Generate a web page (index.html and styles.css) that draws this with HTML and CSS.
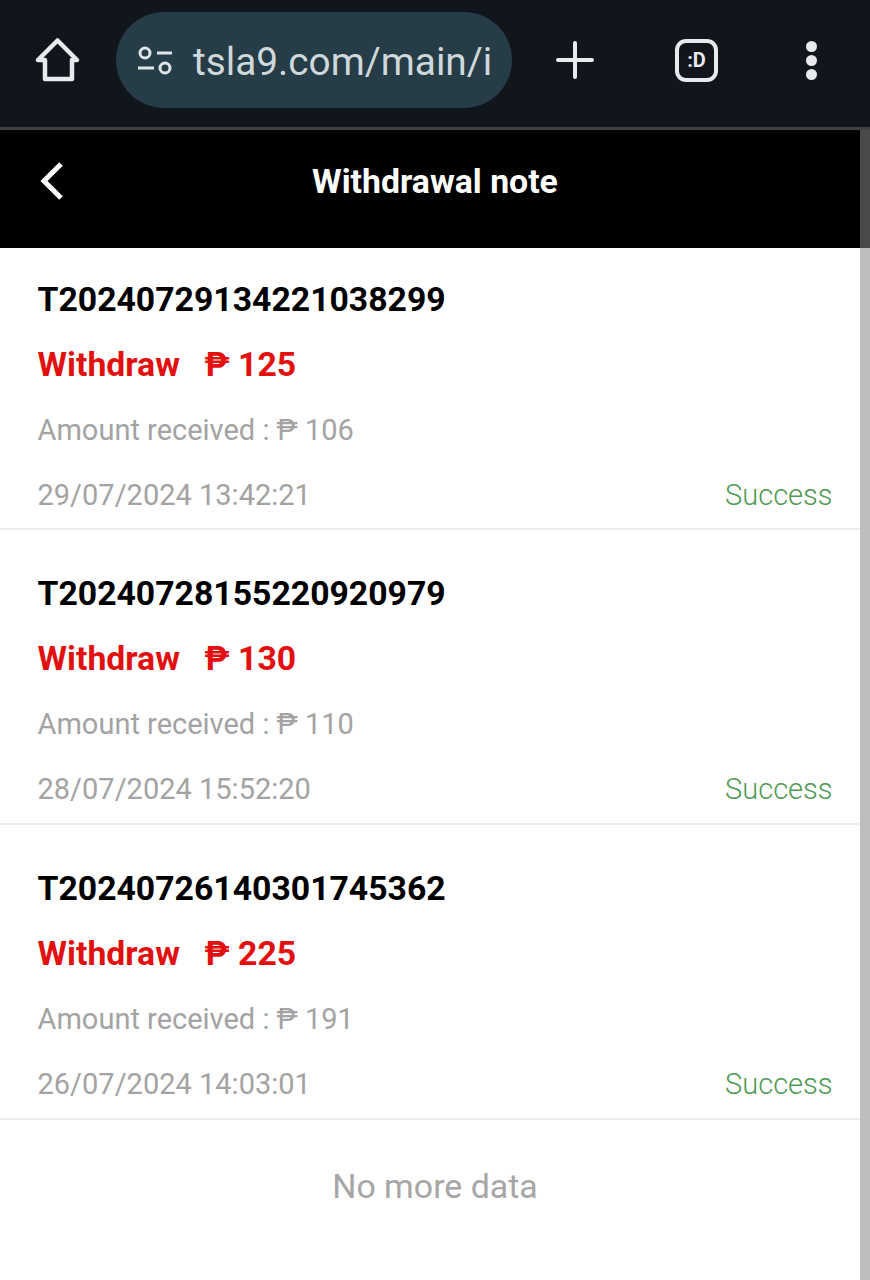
FILE: index.html
```html
<!DOCTYPE html>
<html lang="en">
<head>
  <meta charset="UTF-8" />
  <meta name="viewport" content="width=device-width, initial-scale=1.0" />
  <title>Withdrawal note</title>
  <link rel="stylesheet" href="styles.css">
</head>
<body>
  <div class="toolbar">
    <svg class="icon-home" width="46" height="46" viewBox="0 0 46 46" fill="none" stroke="#e8eaed" stroke-width="4.5" stroke-linejoin="round"><path d="M22.5 3.5 L42 23 H37 V42 H10 V23 H3 Z"/></svg>
    <div class="urlbar">
      <svg width="36" height="29" viewBox="0 0 36 29" fill="none" stroke="#dfe5e8" stroke-width="3"><circle cx="8" cy="7" r="5"/><path d="M20 7 H35"/><path d="M1 22 H17"/><circle cx="28" cy="22" r="5"/></svg>
      <span class="url">tsla9.com/main/i</span>
    </div>
    <svg class="icon-plus" width="38" height="38" viewBox="0 0 38 38" fill="none" stroke="#e8eaed" stroke-width="4" stroke-linecap="round"><path d="M19 2 V36 M2 19 H36"/></svg>
    <div class="tabs">:D</div>
    <div class="dots"><i></i><i></i><i></i></div>
  </div>

  <div class="page">
    <div class="content">
      <header>
        <svg class="back" width="26" height="38" viewBox="0 0 26 38" fill="none" stroke="#fff" stroke-width="5"><path d="M23 2 L6 19 L23 36"/></svg>
        <h1>Withdrawal note</h1>
      </header>

      <div class="list">
        <div class="row">
          <div class="order">T20240729134221038299</div>
          <div class="amount"><span>Withdraw</span><span>₱ 125</span></div>
          <div class="muted">Amount received : ₱ 106</div>
          <div class="foot"><span class="muted">29/07/2024 13:42:21</span><span class="status">Success</span></div>
        </div>
        <div class="row">
          <div class="order">T20240728155220920979</div>
          <div class="amount"><span>Withdraw</span><span>₱ 130</span></div>
          <div class="muted">Amount received : ₱ 110</div>
          <div class="foot"><span class="muted">28/07/2024 15:52:20</span><span class="status">Success</span></div>
        </div>
        <div class="row">
          <div class="order">T20240726140301745362</div>
          <div class="amount"><span>Withdraw</span><span>₱ 225</span></div>
          <div class="muted">Amount received : ₱ 191</div>
          <div class="foot"><span class="muted">26/07/2024 14:03:01</span><span class="status">Success</span></div>
        </div>
      </div>
      <p class="nomore">No more data</p>
    </div>
    <div class="scrollbar"><div class="scrollbar-top"></div></div>
  </div>
</body>
</html>
```

FILE: styles.css
```css
* {
  box-sizing: border-box;
  margin: 0;
  padding: 0;
}
body {
  height: 1280px;
  overflow: hidden;
  background: #fff;
  font-family: 'Roboto', sans-serif;
}
.toolbar {
  height: 130px;
  padding: 12px 35px 19px 35px;
  display: flex;
  align-items: center;
  background: #10161c;
  border-bottom: 3px solid #3c4146;
}
.icon-home {
  flex: none;
}
.urlbar {
  width: 396px;
  height: 96px;
  margin-left: 35px;
  padding-left: 21px;
  display: flex;
  align-items: center;
  gap: 20px;
  flex: none;
  background: #263c47;
  border-radius: 48px;
}
.url {
  padding-top: 3px;
  font-size: 38.8px;
  color: #cfd8dc;
  white-space: nowrap;
}
.icon-plus {
  margin-left: 44px;
  flex: none;
}
.tabs {
  width: 43px;
  height: 43px;
  margin-left: 81px;
  flex: none;
  border: 4px solid #e8eaed;
  border-radius: 11px;
  color: #e8eaed;
  font-size: 20px;
  font-weight: 700;
  line-height: 35px;
  text-align: center;
}
.dots {
  margin-left: 88px;
  display: flex;
  flex-direction: column;
  gap: 3px;
}
.dots i {
  display: block;
  width: 11px;
  height: 11px;
  border-radius: 50%;
  background: #e8eaed;
}
.page {
  display: flex;
  height: 1150px;
}
.content {
  flex: 1;
}
header {
  height: 118px;
  padding: 0 0 16px 10px;
  position: relative;
  display: flex;
  align-items: center;
  justify-content: center;
  background: #000;
}
.back {
  position: absolute;
  left: 38px;
  top: 32px;
}
header h1 {
  font-size: 33.8px;
  font-weight: 700;
  color: #fff;
}
.row {
  padding: 31px 27.5px 2px 37.5px;
  border-bottom: 2px solid #eee;
}
.row:first-child {
  padding-top: 19px;
  padding-bottom: 1px;
}
.row > div {
  height: 65px;
  line-height: 65px;
}
.row > .muted,
.row > .foot {
  line-height: 67px;
}
.order {
  font-size: 33.75px;
  font-weight: 700;
  color: #000;
  white-space: nowrap;
}
.amount {
  display: flex;
  gap: 24.5px;
  font-size: 33.75px;
  font-weight: 700;
  color: #e31010;
}
.muted {
  font-size: 29px;
  color: #a3a3a3;
}
.foot {
  display: flex;
  justify-content: space-between;
}
.status {
  font-size: 29px;
  font-weight: 300;
  color: #4f9a55;
}
.nomore {
  margin-top: 34px;
  padding-left: 10px;
  font-size: 33.9px;
  line-height: 66px;
  color: #a6a6a6;
  text-align: center;
}
.scrollbar {
  width: 10px;
  flex: none;
  background: #bdbdbd;
}
.scrollbar-top {
  height: 118px;
  background: #4a4a4a;
}
```
